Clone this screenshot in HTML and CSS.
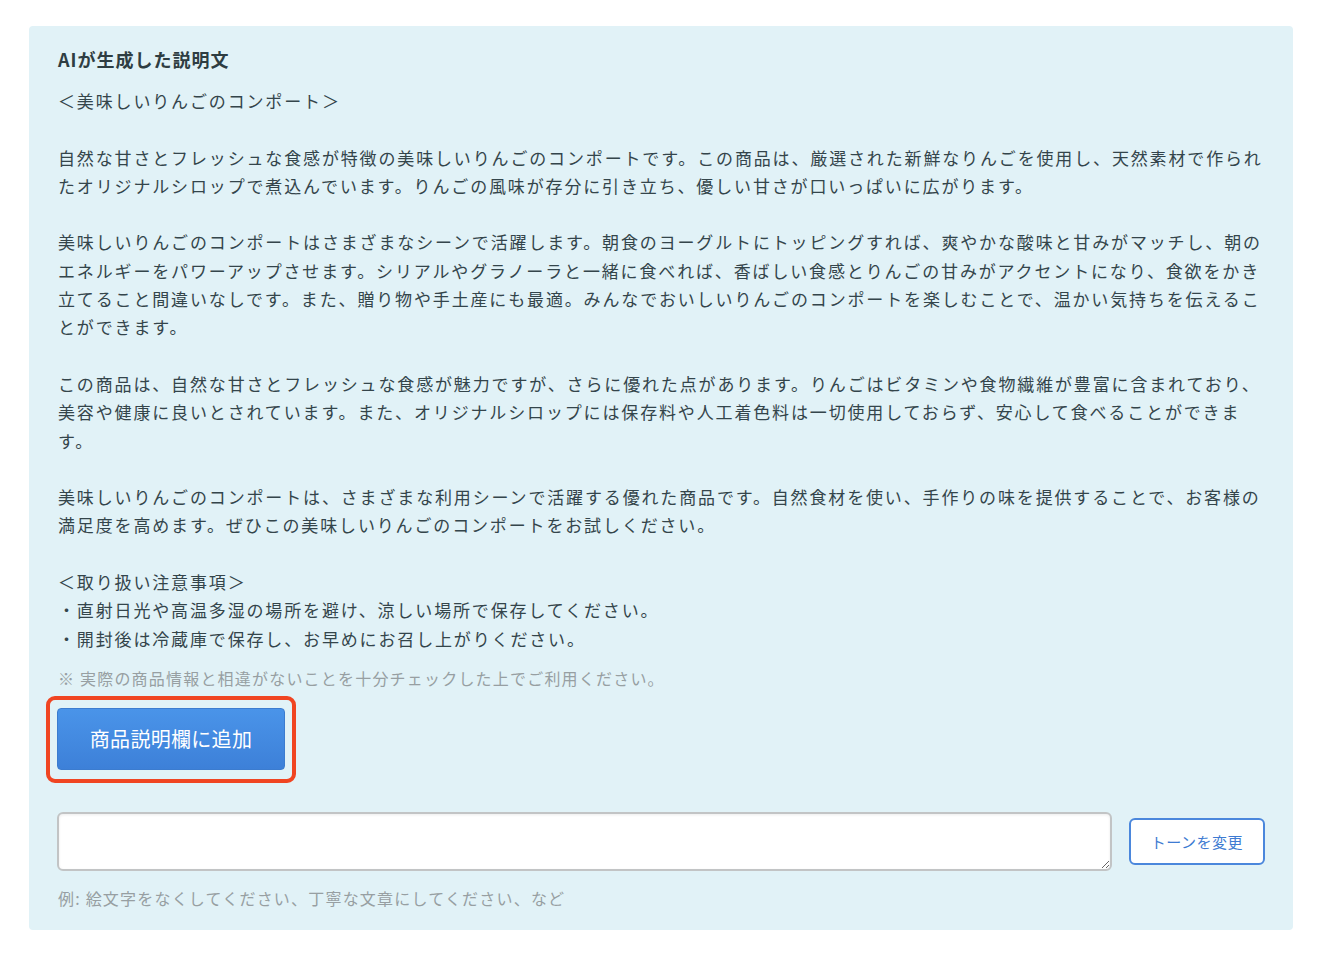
FILE: index.html
```html
<!DOCTYPE html>
<html lang="ja">
<head>
    <meta charset="UTF-8">
    <meta name="viewport" content="width=device-width, initial-scale=1.0">
    <title>AIが生成した説明文</title>
    <link rel="stylesheet" href="styles.css">
</head>
<body>
    <div class="panel">
        <h2 class="panel-title">AIが生成した説明文</h2>
        <div class="description">＜美味しいりんごのコンポート＞

自然な甘さとフレッシュな食感が特徴の美味しいりんごのコンポートです。この商品は、厳選された新鮮なりんごを使用し、天然素材で作られ
たオリジナルシロップで煮込んでいます。りんごの風味が存分に引き立ち、優しい甘さが口いっぱいに広がります。

美味しいりんごのコンポートはさまざまなシーンで活躍します。朝食のヨーグルトにトッピングすれば、爽やかな酸味と甘みがマッチし、朝の
エネルギーをパワーアップさせます。シリアルやグラノーラと一緒に食べれば、香ばしい食感とりんごの甘みがアクセントになり、食欲をかき
立てること間違いなしです。また、贈り物や手土産にも最適。みんなでおいしいりんごのコンポートを楽しむことで、温かい気持ちを伝えるこ
とができます。

この商品は、自然な甘さとフレッシュな食感が魅力ですが、さらに優れた点があります。りんごはビタミンや食物繊維が豊富に含まれており、
美容や健康に良いとされています。また、オリジナルシロップには保存料や人工着色料は一切使用しておらず、安心して食べることができま
す。

美味しいりんごのコンポートは、さまざまな利用シーンで活躍する優れた商品です。自然食材を使い、手作りの味を提供することで、お客様の
満足度を高めます。ぜひこの美味しいりんごのコンポートをお試しください。

＜取り扱い注意事項＞
・直射日光や高温多湿の場所を避け、涼しい場所で保存してください。
・開封後は冷蔵庫で保存し、お早めにお召し上がりください。</div>
        <p class="note">※ 実際の商品情報と相違がないことを十分チェックした上でご利用ください。</p>

        <div class="highlight">
            <button class="add-btn">商品説明欄に追加</button>
        </div>

        <div class="tone-row">
            <textarea class="tone-input"></textarea>
            <button class="tone-btn">トーンを変更</button>
        </div>
        <p class="hint">例: 絵文字をなくしてください、丁寧な文章にしてください、など</p>
    </div>
</body>
</html>
```

FILE: styles.css
```css
body {
    margin: 0;
    padding: 26px 32px 30px 29px;
    background: #fff;
    font-family: 'Noto Sans CJK JP', 'Noto Sans', sans-serif;
    color: #34454b;
}

.panel {
    background: #e1f2f7;
    border-radius: 4px;
    padding: 19px 28px 20px 28px;
}

.panel-title {
    margin: 0 0 14px 1px;
    font-size: 18px;
    line-height: 28px;
    font-weight: bold;
    letter-spacing: 1px;
    color: #2e3d42;
}

.description {
    white-space: pre-line;
    font-size: 17px;
    line-height: 28.3px;
    letter-spacing: 1.85px;
    margin-left: 1px;
}

.note {
    margin: 13px 0 0 1px;
    font-size: 16px;
    line-height: 24px;
    letter-spacing: 1.2px;
    color: #979fa2;
}

.highlight {
    display: flex;
    width: fit-content;
    margin: 6px 0 0 -11px;
    padding: 8px 7px 9px;
    border: 4px solid #f04522;
    border-radius: 9px;
}

.add-btn {
    box-sizing: border-box;
    width: 228px;
    height: 62px;
    border: 1px solid #3c7ccf;
    border-radius: 4px;
    background: linear-gradient(#4a94e9, #3d80d8);
    color: #fff;
    font-family: inherit;
    font-size: 20px;
    letter-spacing: 0.3px;
    cursor: pointer;
}

.tone-row {
    display: flex;
    align-items: center;
    gap: 17px;
    margin-top: 29px;
}

.tone-input {
    flex: 1;
    height: 59px;
    box-sizing: border-box;
    border: 2px solid #c2c4c5;
    border-radius: 6px;
    background: #fff;
    box-shadow: inset 0 1px 3px rgba(0, 0, 0, 0.08);
    font-family: inherit;
    font-size: 16px;
}

.tone-btn {
    box-sizing: border-box;
    width: 136px;
    height: 47px;
    border: 2px solid #4b87dc;
    border-radius: 6px;
    background: #fff;
    color: #3e7bd2;
    font-family: inherit;
    font-size: 15px;
    letter-spacing: 0.5px;
    cursor: pointer;
}

.hint {
    margin: 15px 0 0 1px;
    font-size: 16px;
    line-height: 24px;
    letter-spacing: 1.2px;
    color: #979fa2;
}
```
